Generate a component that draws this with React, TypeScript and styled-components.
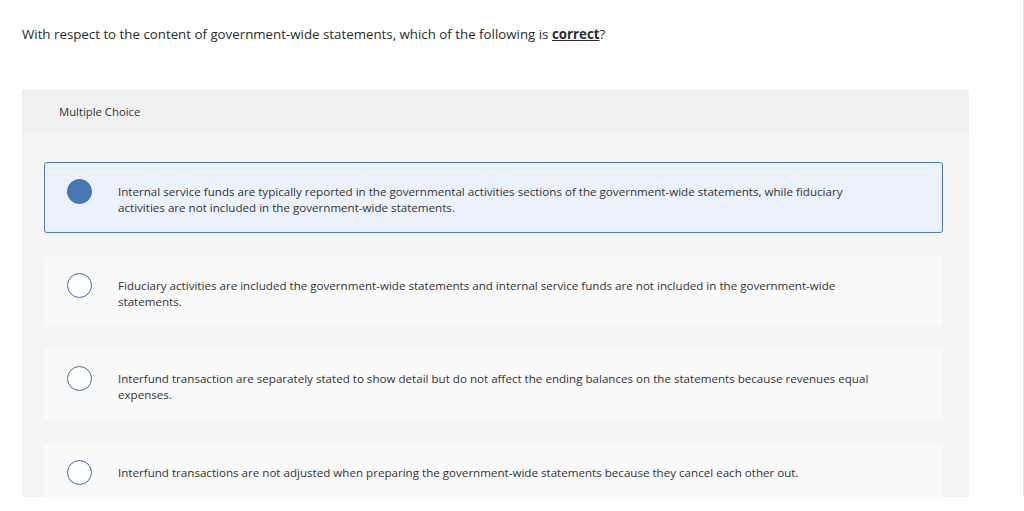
import React, { useState } from "react";
import styled, { createGlobalStyle } from "styled-components";

const GlobalStyle = createGlobalStyle`
  html, body {
    margin: 0;
    padding: 0;
    background: #fff;
  }
  body {
    font-family: "Open Sans", "Liberation Sans", sans-serif;
    color: #333;
  }
`;

const options = [
  "Internal service funds are typically reported in the governmental activities sections of the government-wide statements, while fiduciary activities are not included in the government-wide statements.",
  "Fiduciary activities are included the government-wide statements and internal service funds are not included in the government-wide statements.",
  "Interfund transaction are separately stated to show detail but do not affect the ending balances on the statements because revenues equal expenses.",
  "Interfund transactions are not adjusted when preparing the government-wide statements because they cancel each other out.",
];

export default function App() {
  const [picked, setPicked] = useState(0);

  return (
    <>
      <GlobalStyle />
      <Frame>
        <Question>
          With respect to the content of government-wide statements, which of the following is <Strong>correct</Strong>?
        </Question>

        <Panel>
          <PanelHeader>Multiple Choice</PanelHeader>
          <OptionList>
            {options.map((text, i) => (
              <Option key={i} $selected={picked === i} onClick={() => setPicked(i)}>
                <Radio $selected={picked === i} />
                <OptionText>{text}</OptionText>
              </Option>
            ))}
          </OptionList>
        </Panel>
      </Frame>
    </>
  );
}

const Frame = styled.div`
  box-sizing: border-box;
  width: 1024px;
  height: 497px;
  overflow: hidden;
  border-right: 1px solid #e2e2e2;
  padding: 25px 54px 0 22px;
`;

const Question = styled.p`
  margin: 0 0 46px;
  font-size: 13.3px;
  line-height: 18px;
  color: #2b2b2b;
`;

const Strong = styled.span`
  font-weight: 700;
  text-decoration: underline;
`;

const Panel = styled.div`
  background: #f5f5f5;
  border-radius: 3px 3px 0 0;
  padding-bottom: 40px;
`;

const PanelHeader = styled.div`
  height: 44px;
  display: flex;
  align-items: center;
  padding-left: 37px;
  background: #f0f0f0;
  border-radius: 3px 3px 0 0;
  font-size: 11.3px;
  color: #333;
`;

const OptionList = styled.div`
  display: flex;
  flex-direction: column;
  gap: 22.6px;
  padding: 29px 26px 0 22px;
`;

const Option = styled.div<{ $selected: boolean }>`
  box-sizing: border-box;
  min-height: 71px;
  display: flex;
  align-items: flex-start;
  gap: 26px;
  padding: 16px 58px 0 22px;
  border-radius: 3px;
  border: 1px solid ${(p) => (p.$selected ? "#4a7bbf" : "transparent")};
  background: ${(p) => (p.$selected ? "#ebf2fb" : "#fafafa")};
  cursor: pointer;
`;

const Radio = styled.span<{ $selected: boolean }>`
  flex: none;
  box-sizing: border-box;
  width: 25px;
  height: 25px;
  border-radius: 50%;
  border: 1px solid #3e6ba6;
  background: ${(p) => (p.$selected ? "#4a78b5" : "#fff")};
`;

const OptionText = styled.div`
  margin-top: 5px;
  font-size: 11.6px;
  line-height: 16px;
  color: #333;
`;
